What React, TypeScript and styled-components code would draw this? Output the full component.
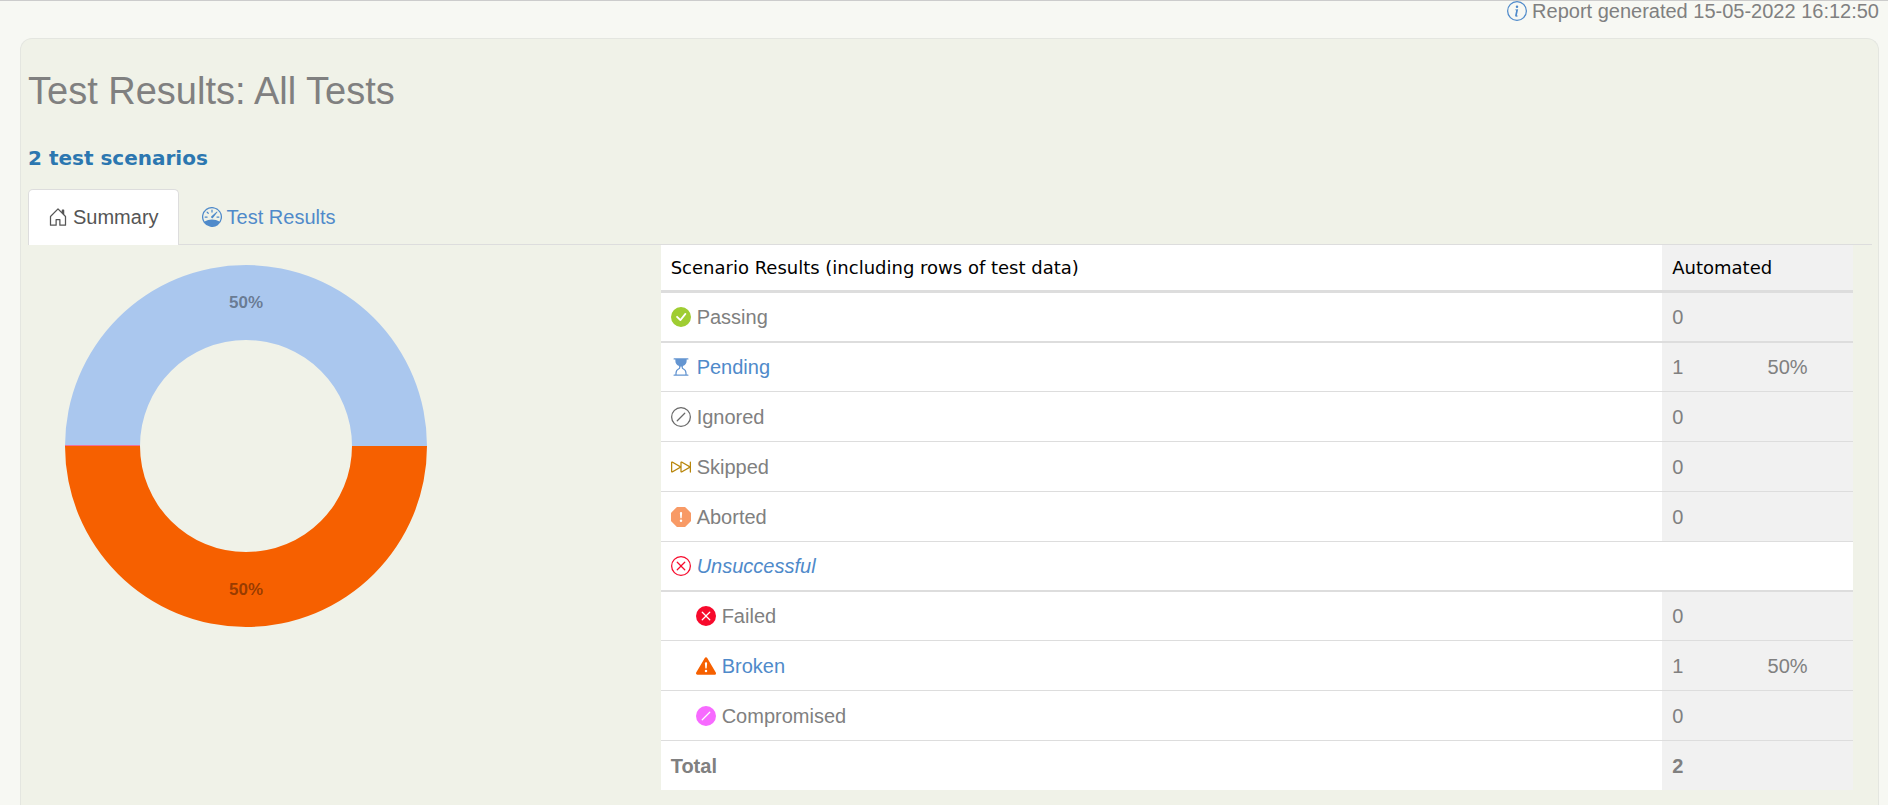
import React from 'react';
import styled, { createGlobalStyle } from 'styled-components';
import type { IconType } from 'react-icons';
import {
  BsCheckCircleFill,
  BsExclamationOctagonFill,
  BsExclamationTriangleFill,
  BsHourglassTop,
  BsHouseDoor,
  BsInfoCircle,
  BsSkipForward,
  BsSlashCircle,
  BsSlashCircleFill,
  BsSpeedometer,
  BsXCircle,
  BsXCircleFill,
} from 'react-icons/bs';

const GlobalStyle = createGlobalStyle`
  * { box-sizing: border-box; }
  body {
    margin: 0;
    background: #f7f8f3;
    color: #808080;
    font: 20px/28px Arial, "Liberation Sans", sans-serif;
  }
  a { color: #4f8aca; text-decoration: none; }
`;

const Page = styled.div`
  display: flex;
  flex-direction: column;
  min-height: 100vh;
  border-top: 1px solid #ccc;
`;

const ReportInfo = styled.header`
  display: flex;
  justify-content: flex-end;
  align-items: center;
  gap: 5px;
  height: 37px;
  padding: 0 9px 17px 0;
  line-height: 20px;

  svg { color: #4f8aca; }
`;

const Panel = styled.main`
  flex: 1;
  margin: 0 9px 0 20px;
  padding: 0 6px 14px 7px;
  border: 1px solid #e4e6e0;
  border-bottom: 0;
  border-radius: 12px 12px 0 0;
  background: #f0f2e8;
`;

const Title = styled.h1`
  margin: 30px 0 0;
  font-size: 38px;
  font-weight: 400;
  line-height: 44px;
`;

const ScenarioCount = styled.h2`
  margin: 31px 0 0;
  color: #2c77b0;
  font: bold 20px/28px "DejaVu Sans", Verdana, sans-serif;
`;

const Tabs = styled.nav`
  display: flex;
  gap: 3px;
  margin-top: 17px;
  border-bottom: 1px solid #ddd;
`;

const Tab = styled.a<{ $active?: boolean }>`
  display: flex;
  align-items: center;
  gap: 5px;
  height: 56px;
  margin-bottom: -1px;
  padding: 0 19px 2px;
  border: 1px solid ${(p) => (p.$active ? '#ddd' : 'transparent')};
  border-bottom: 0;
  border-radius: 5px 5px 0 0;
  background: ${(p) => (p.$active ? '#fff' : 'transparent')};
  color: ${(p) => (p.$active ? '#555' : '#4f8aca')};
`;

const Summary = styled.section`
  display: grid;
  grid-template-columns: 1fr 2fr;
`;

const Chart = styled.svg`
  display: block;
  width: 362px;
  height: 362px;
  margin: 20px 0 0 37px;
`;

const ChartLabel = styled.text`
  fill: #000;
  fill-opacity: 0.4;
  font-size: 17px;
  font-weight: bold;
  text-anchor: middle;
`;

const TableArea = styled.div`
  padding: 0 19px 0 18px;
`;

const Table = styled.table`
  width: 100%;
  table-layout: fixed;
  border-spacing: 0;
  background: #fff;
`;

const LabelCol = styled.col`
  width: 84%;
`;

const HeadCell = styled.th<{ $shaded?: boolean }>`
  height: 45px;
  padding: 0 10px;
  background: ${(p) => (p.$shaded ? '#f1f1f1' : '#fff')};
  color: #000;
  font: 18px/28px "DejaVu Sans", Verdana, sans-serif;
  text-align: left;
`;

const Row = styled.tr<{ $rule: number; $bold?: boolean }>`
  font-weight: ${(p) => (p.$bold ? 'bold' : 'normal')};

  td, th { border-top: ${(p) => p.$rule}px solid #ddd; }
`;

const LabelCell = styled.th<{ $height: number }>`
  height: ${(p) => p.$height}px;
  padding: 0 10px;
  font-weight: inherit;
  text-align: left;
`;

const ValueCell = styled.td`
  padding: 0 10px;
  background: #f1f1f1;
`;

const Label = styled.span<{ $nested?: boolean; $italic?: boolean }>`
  display: flex;
  align-items: center;
  gap: 6px;
  padding-left: ${(p) => (p.$nested ? 25 : 0)}px;
  font-style: ${(p) => (p.$italic ? 'italic' : 'normal')};
`;

type Result = {
  label: string;
  icon?: IconType;
  color?: string;
  count?: number;
  share?: string;
  link?: boolean;
  nested?: boolean;
  group?: boolean;
  total?: boolean;
  rule?: number;
  height?: number;
};

const results: Result[] = [
  { label: 'Passing', icon: BsCheckCircleFill, color: '#9fcd32', count: 0, rule: 3, height: 51 },
  { label: 'Pending', icon: BsHourglassTop, color: '#6495d1', count: 1, share: '50%', link: true, rule: 2 },
  { label: 'Ignored', icon: BsSlashCircle, color: '#696969', count: 0 },
  { label: 'Skipped', icon: BsSkipForward, color: '#b8860b', count: 0 },
  { label: 'Aborted', icon: BsExclamationOctagonFill, color: '#f89a66', count: 0 },
  { label: 'Unsuccessful', icon: BsXCircle, color: '#f70a2c', link: true, group: true, height: 49 },
  { label: 'Failed', icon: BsXCircleFill, color: '#f70a2c', count: 0, nested: true, rule: 2 },
  { label: 'Broken', icon: BsExclamationTriangleFill, color: '#f66000', count: 1, share: '50%', link: true, nested: true },
  { label: 'Compromised', icon: BsSlashCircleFill, color: '#f76aff', count: 0, nested: true },
  { label: 'Total', count: 2, total: true },
];

function ResultRow({
  label,
  icon: Icon,
  color,
  count,
  share,
  link,
  nested,
  group,
  total,
  rule = 1,
  height = 50,
}: Result) {
  return (
    <Row $rule={rule} $bold={total}>
      <LabelCell scope="row" colSpan={group ? 3 : 1} $height={height}>
        <Label $nested={nested} $italic={group}>
          {Icon && <Icon size={20} color={color} aria-hidden />}
          {link ? <a href={`#${label.toLowerCase()}`}>{label}</a> : label}
        </Label>
      </LabelCell>
      {!group && <ValueCell>{count}</ValueCell>}
      {!group && <ValueCell>{share}</ValueCell>}
    </Row>
  );
}

export default function App() {
  return (
    <>
      <GlobalStyle />
      <Page>
        <ReportInfo>
          <BsInfoCircle size={20} aria-hidden />
          <span>Report generated 15-05-2022 16:12:50</span>
        </ReportInfo>
        <Panel>
          <Title>Test Results: All Tests</Title>
          <ScenarioCount>2 test scenarios</ScenarioCount>
          <Tabs>
            <Tab href="#summary" $active aria-current="page">
              <BsHouseDoor size={20} aria-hidden />
              Summary
            </Tab>
            <Tab href="#tests">
              <BsSpeedometer size={20} aria-hidden />
              Test Results
            </Tab>
          </Tabs>
          <Summary>
            <Chart viewBox="0 0 362 362" role="img" aria-label="Pending 50%, broken 50%">
              <path d="M0 181A181 181 0 0 1 362 181H287A106 106 0 0 0 75 181Z" fill="#aac7ee" />
              <path d="M0 181A181 181 0 0 0 362 181H287A106 106 0 0 1 75 181Z" fill="#f66000" />
              <path d="M0 180.5H75" stroke="#f0709a" />
              <ChartLabel x="181" y="43">50%</ChartLabel>
              <ChartLabel x="181" y="330">50%</ChartLabel>
            </Chart>
            <TableArea>
              <Table>
                <colgroup>
                  <LabelCol />
                  <col />
                  <col />
                </colgroup>
                <thead>
                  <tr>
                    <HeadCell scope="col">Scenario Results (including rows of test data)</HeadCell>
                    <HeadCell scope="col" colSpan={2} $shaded>Automated</HeadCell>
                  </tr>
                </thead>
                <tbody>
                  {results.map((r) => (
                    <ResultRow key={r.label} {...r} />
                  ))}
                </tbody>
              </Table>
            </TableArea>
          </Summary>
        </Panel>
      </Page>
    </>
  );
}
